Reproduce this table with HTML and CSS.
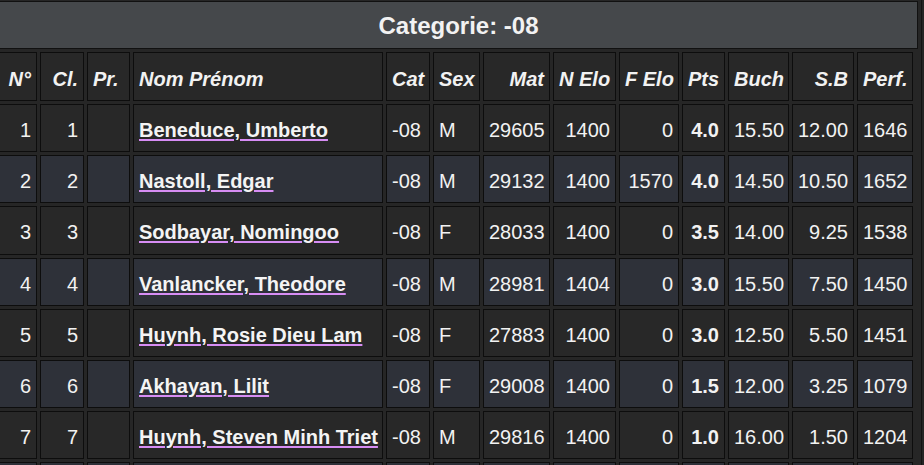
FILE: index.html
```html
<!DOCTYPE html>
<html lang="fr">
<head>
<meta charset="utf-8">
<title>Categorie: -08</title>
<link rel="stylesheet" href="styles.css">
</head>
<body>
<div class="frame">
  <div class="title">Categorie: -08</div>
  <table class="results">
    <thead>
      <tr>
        <th class="c-no r">N°</th>
        <th class="c-cl r">Cl.</th>
        <th class="c-pr">Pr.</th>
        <th class="c-name">Nom Prénom</th>
        <th class="c-cat">Cat</th>
        <th class="c-sex">Sex</th>
        <th class="c-mat r">Mat</th>
        <th class="c-nelo r">N Elo</th>
        <th class="c-felo r">F Elo</th>
        <th class="c-pts r">Pts</th>
        <th class="c-buch r">Buch</th>
        <th class="c-sb r">S.B</th>
        <th class="c-perf r">Perf.</th>
      </tr>
    </thead>
    <tbody>
      <tr>
        <td class="r">1</td><td class="r">1</td><td></td>
        <td><a href="#" class="player">Beneduce, Umberto</a></td>
        <td>-08</td><td>M</td><td class="r">29605</td><td class="r">1400</td><td class="r">0</td>
        <td class="r pts">4.0</td><td class="r">15.50</td><td class="r">12.00</td><td class="r">1646</td>
      </tr>
      <tr>
        <td class="r">2</td><td class="r">2</td><td></td>
        <td><a href="#" class="player">Nastoll, Edgar</a></td>
        <td>-08</td><td>M</td><td class="r">29132</td><td class="r">1400</td><td class="r">1570</td>
        <td class="r pts">4.0</td><td class="r">14.50</td><td class="r">10.50</td><td class="r">1652</td>
      </tr>
      <tr>
        <td class="r">3</td><td class="r">3</td><td></td>
        <td><a href="#" class="player">Sodbayar, Nomingoo</a></td>
        <td>-08</td><td>F</td><td class="r">28033</td><td class="r">1400</td><td class="r">0</td>
        <td class="r pts">3.5</td><td class="r">14.00</td><td class="r">9.25</td><td class="r">1538</td>
      </tr>
      <tr>
        <td class="r">4</td><td class="r">4</td><td></td>
        <td><a href="#" class="player">Vanlancker, Theodore</a></td>
        <td>-08</td><td>M</td><td class="r">28981</td><td class="r">1404</td><td class="r">0</td>
        <td class="r pts">3.0</td><td class="r">15.50</td><td class="r">7.50</td><td class="r">1450</td>
      </tr>
      <tr>
        <td class="r">5</td><td class="r">5</td><td></td>
        <td><a href="#" class="player">Huynh, Rosie Dieu Lam</a></td>
        <td>-08</td><td>F</td><td class="r">27883</td><td class="r">1400</td><td class="r">0</td>
        <td class="r pts">3.0</td><td class="r">12.50</td><td class="r">5.50</td><td class="r">1451</td>
      </tr>
      <tr>
        <td class="r">6</td><td class="r">6</td><td></td>
        <td><a href="#" class="player">Akhayan, Lilit</a></td>
        <td>-08</td><td>F</td><td class="r">29008</td><td class="r">1400</td><td class="r">0</td>
        <td class="r pts">1.5</td><td class="r">12.00</td><td class="r">3.25</td><td class="r">1079</td>
      </tr>
      <tr>
        <td class="r">7</td><td class="r">7</td><td></td>
        <td><a href="#" class="player">Huynh, Steven Minh Triet</a></td>
        <td>-08</td><td>M</td><td class="r">29816</td><td class="r">1400</td><td class="r">0</td>
        <td class="r pts">1.0</td><td class="r">16.00</td><td class="r">1.50</td><td class="r">1204</td>
      </tr>
      <tr>
        <td></td><td></td><td></td><td></td><td></td><td></td><td></td>
        <td></td><td></td><td></td><td></td><td></td><td></td>
      </tr>
    </tbody>
  </table>
</div>
</body>
</html>
```
FILE: styles.css
```css
html, body {
  margin: 0;
  padding: 0;
  background: #252525;
  overflow: hidden;
}

body {
  font-family: "Liberation Sans", Arial, sans-serif;
  color: #f2f2f2;
  font-size: 20px;
}

.frame {
  width: 921px;
  height: 465px;
  border-right: 1px solid #131313;
  box-sizing: content-box;
  background: #262626;
  overflow: hidden;
  padding-top: 1px;
}

.title {
  box-sizing: border-box;
  width: 919px;
  height: 48px;
  margin-left: -1px;
  background: #45484b;
  border: 1px solid #111;
  font-size: 24px;
  font-weight: bold;
  text-align: center;
  line-height: 47px;
}

.results {
  margin-left: -6px;
  width: 922px;
  table-layout: fixed;
  border-collapse: separate;
  border-spacing: 3px;
}

.results th,
.results td {
  box-sizing: border-box;
  border: 1px solid #0d0d0d;
  padding: 5px 5px 0 5px;
  vertical-align: middle;
  text-align: left;
  white-space: nowrap;
  overflow: hidden;
  background: #282828;
}

.results th {
  height: 49px;
  font-weight: bold;
  font-style: italic;
}

.results td {
  height: 48.2px;
}

.results tbody tr:nth-child(even) td {
  background: #2e3139;
}

.results .r {
  text-align: right;
}

.pts {
  font-weight: bold;
}

.player {
  color: #f4f4f4;
  font-weight: bold;
  text-decoration: underline;
  text-decoration-color: #d78df4;
  text-decoration-thickness: 2px;
  text-decoration-skip-ink: auto;
  text-underline-offset: 2px;
}

.c-no { width: 40px; }
.c-cl { width: 44px; }
.c-pr { width: 43px; }
.c-name { width: 250px; }
.c-cat { width: 44px; }
.c-sex { width: 47px; }
.c-mat { width: 67px; }
.c-nelo { width: 63px; }
.c-felo { width: 60px; }
.c-pts { width: 43px; }
.c-buch { width: 61px; }
.c-sb { width: 62px; }
.c-perf { width: 56px; }
```
